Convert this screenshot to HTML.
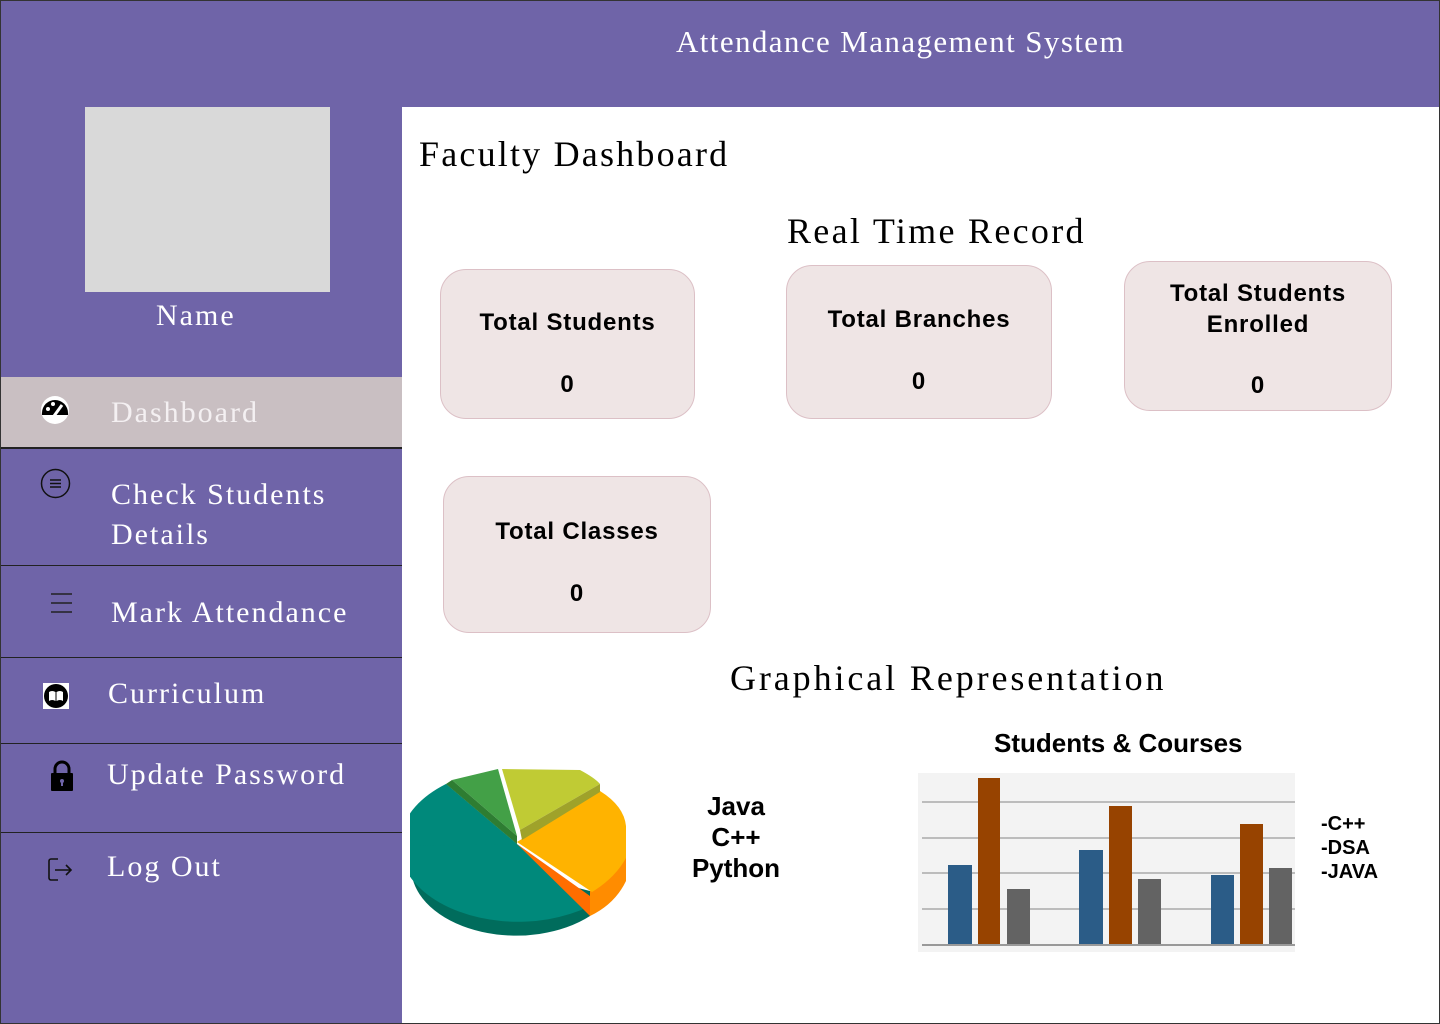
<!DOCTYPE html>
<html><head><meta charset="utf-8"><style>
*{margin:0;padding:0;box-sizing:border-box}
body{width:1440px;height:1024px;position:relative;overflow:hidden;background:#fff;font-family:"Liberation Sans",sans-serif}
.a{position:absolute}
.serif{font-family:"Liberation Serif",serif}
.side{left:0;top:0;width:402px;height:1024px;background:#6f64a8}
.hdr{left:0;top:0;width:1440px;height:107px;background:#6f64a8}
.frame{left:0;top:0;width:1440px;height:1024px;border:1px solid #333;pointer-events:none}
.nav{color:#fff;font-size:30px;letter-spacing:2px}
.line{left:0;width:402px;height:2px;background:#222}
.card{background:#efe5e5;border:1px solid #dcc0c6;border-radius:26px;text-align:center;font-weight:bold;font-size:24px;letter-spacing:0.8px;color:#000}
</style></head><body>
<div class="a hdr"></div>
<div class="a side"></div>
<div class="a serif" style="left:676px;top:24px;color:#fff;font-size:31px;letter-spacing:1.4px">Attendance Management System</div>
<div class="a" style="left:85px;top:107px;width:245px;height:185px;background:#d9d9d9"></div>
<div class="a serif" style="left:156px;top:299px;color:#fff;font-size:30px;letter-spacing:2px">Name</div>

<div class="a" style="left:1px;top:377px;width:401px;height:70px;background:#c9bfc2"></div>
<div class="a line" style="top:447px"></div>
<div class="a line" style="top:565px;height:1px"></div>
<div class="a line" style="top:657px;height:1px"></div>
<div class="a line" style="top:743px;height:1px"></div>
<div class="a line" style="top:832px;height:1px"></div>

<svg class="a" style="left:40px;top:396px" width="30" height="28" viewBox="0 0 30 28"><circle cx="15" cy="14" r="14" fill="#fff"/><path d="M2 17 A13 13 0 0 1 28 17 L28 19 L2 19Z" fill="#000"/><circle cx="8" cy="13" r="2" fill="#fff"/><circle cx="13" cy="8" r="2" fill="#fff"/><path d="M14 20 L22 9" stroke="#fff" stroke-width="3"/></svg>
<div class="a serif nav" style="left:111px;top:396px;color:#f4f0f2">Dashboard</div>

<svg class="a" style="left:40px;top:468px" width="31" height="31"><circle cx="15.5" cy="15.5" r="14" fill="none" stroke="#111" stroke-width="1.5"/><path d="M10 12h11M10 15.5h11M10 19h11" stroke="#111" stroke-width="1.5"/></svg>
<div class="a serif nav" style="left:111px;top:475px;line-height:40px">Check Students<br>Details</div>

<svg class="a" style="left:50px;top:592px" width="22" height="22"><path d="M1 2h21M1 11h21M1 20h21" stroke="#222" stroke-width="1.5"/></svg>
<div class="a serif nav" style="left:111px;top:596px">Mark Attendance</div>

<svg class="a" style="left:43px;top:683px" width="26" height="26"><rect width="26" height="26" fill="#fff"/><circle cx="13" cy="13" r="12" fill="#000"/><path d="M6 9 Q9 7 12.5 9 V18 Q9 16 6 18Z M13.5 9 Q17 7 20 9 V18 Q17 16 13.5 18Z" fill="#fff"/></svg>
<div class="a serif nav" style="left:108px;top:677px">Curriculum</div>

<svg class="a" style="left:50px;top:760px" width="24" height="32"><path d="M5 13 V9 A7 7 0 0 1 19 9 V13" fill="none" stroke="#000" stroke-width="3"/><rect x="1" y="13" width="22" height="18" rx="1" fill="#000"/><circle cx="12" cy="21" r="2" fill="#6f64a8"/><rect x="11" y="21" width="2" height="5" fill="#6f64a8"/></svg>
<div class="a serif nav" style="left:107px;top:758px">Update Password</div>

<svg class="a" style="left:46px;top:856px" width="28" height="28"><path d="M12 3H5a2 2 0 0 0-2 2v17a2 2 0 0 0 2 2h7" fill="none" stroke="#111" stroke-width="1.6"/><path d="M9 14h16M20 9l5 5-5 5" fill="none" stroke="#111" stroke-width="1.6"/></svg>
<div class="a serif nav" style="left:107px;top:850px">Log Out</div>

<div class="a serif" style="left:419px;top:133px;font-size:36px;letter-spacing:2.2px;color:#000">Faculty Dashboard</div>
<div class="a serif" style="left:787px;top:210px;font-size:36px;letter-spacing:2.3px;color:#000">Real Time Record</div>

<div class="a card" style="left:440px;top:269px;width:255px;height:150px;padding-top:38px;line-height:30px">Total Students<div style="margin-top:32px">0</div></div>
<div class="a card" style="left:786px;top:265px;width:266px;height:154px;padding-top:39px;line-height:30px">Total Branches<div style="margin-top:32px">0</div></div>
<div class="a card" style="left:1124px;top:261px;width:268px;height:150px;padding-top:16px;line-height:31px">Total Students<br>Enrolled<div style="margin-top:30px">0</div></div>
<div class="a card" style="left:443px;top:476px;width:268px;height:157px;padding-top:40px;line-height:30px">Total Classes<div style="margin-top:32px">0</div></div>

<div class="a serif" style="left:730px;top:657px;font-size:36px;letter-spacing:2.9px;color:#000">Graphical Representation</div>

<svg class="a" style="left:410px;top:766px" width="220" height="176" viewBox="0 0 220 176">
<path d="M2 80 V110 A105 68 0 0 0 180 150 V125 Z" fill="#006c5c"/>
<path d="M36 18 A105 68 0 0 0 180 140 L107 78 Z" fill="#00897b"/>
<path d="M2 80 A105 68 0 0 1 36 18 L107 78 Z" fill="#00897b"/>
<path d="M180 125 L180 150 Q205 138 216 115 V90 Q200 115 180 125Z" fill="#ff8c00"/>
<path d="M107 78 L180 130 L180 150 L170 140 Z" fill="#ff6d00"/>
<path d="M107 76 L190 25 Q214 40 216 60 V92 Q205 112 182 126 Z" fill="#ffb300"/>
<path d="M42 14 L88 3 L107 70 Z" fill="#43a047"/>
<path d="M36 18 L42 14 L107 70 L107 78Z" fill="#2e7d32"/>
<path d="M92 3 L170 4 Q185 12 190 18 L110 64 Z" fill="#c0cb34"/>
<path d="M190 18 L190 26 L112 74 L110 64Z" fill="#9fa22a"/>
</svg>
<div class="a" style="left:676px;top:791px;width:120px;text-align:center;font-weight:bold;font-size:26px;line-height:31px;color:#000">Java<br>C++<br>Python</div>

<div class="a" style="left:994px;top:728px;font-weight:bold;font-size:26px;color:#000">Students &amp; Courses</div>
<svg class="a" style="left:918px;top:773px" width="377" height="179">
<rect width="377" height="179" fill="#f3f3f3"/>
<g stroke="#aaa" stroke-width="1.5"><path d="M4 29H377M4 65H377M4 100H377M4 136H377"/><path d="M4 172H377" stroke="#999" stroke-width="2"/></g>
<g fill="#2b5c87"><rect x="30" y="92" width="24" height="79"/><rect x="161" y="77" width="24" height="94"/><rect x="293" y="102" width="23" height="69"/></g>
<g fill="#974300"><rect x="60" y="5" width="22" height="166"/><rect x="191" y="33" width="23" height="138"/><rect x="322" y="51" width="23" height="120"/></g>
<g fill="#636363"><rect x="89" y="116" width="23" height="55"/><rect x="220" y="106" width="23" height="65"/><rect x="351" y="95" width="23" height="76"/></g>
</svg>
<div class="a" style="left:1321px;top:812px;font-weight:bold;font-size:20px;line-height:24px;color:#000">-C++<br>-DSA<br>-JAVA</div>
<div class="a frame"></div>
</body></html>
